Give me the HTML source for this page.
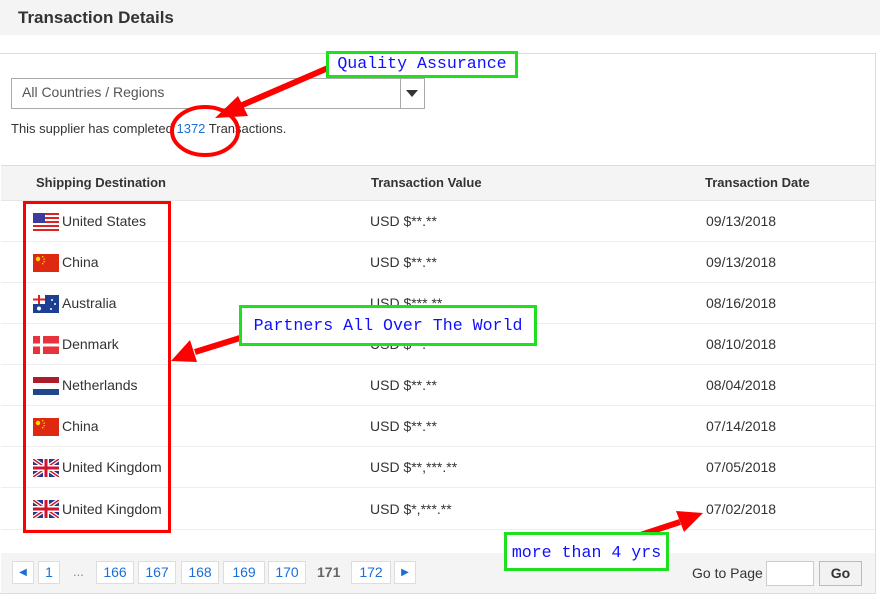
<!DOCTYPE html>
<html><head><meta charset="utf-8"><style>
*{margin:0;padding:0;box-sizing:border-box}
body{width:880px;height:599px;background:#fff;font-family:"Liberation Sans",Arial,sans-serif;font-size:14px;color:#333;position:relative;overflow:hidden}
.a{position:absolute}
.row{position:absolute;left:1px;width:874px;height:41px;border-bottom:1px solid #eee}
.row span{position:absolute;top:12px;font-size:14px;color:#333}
.flag{position:absolute;left:32px;top:12px;width:26px;height:18px}
.pb{position:absolute;top:561px;height:23px;border:1px solid #ddd;background:#fff;color:#1a6fd6;font-size:14px;text-align:center;line-height:21px}
.ann{position:absolute;border:3px solid #1fe01f;background:#fff;color:#1010ff;font-family:"Liberation Mono",monospace;font-size:16.6px;text-align:center;white-space:nowrap}
</style></head><body>
<div class="a" style="left:0;top:0;width:880px;height:35px;background:#f4f4f4"></div>
<div class="a" style="left:18px;top:8px;font-size:17px;font-weight:bold;color:#333">Transaction Details</div>
<div class="a" style="left:0;top:53px;width:876px;height:541px;border:1px solid #ddd;border-left:none"></div>
<div class="a" style="left:11px;top:78px;width:414px;height:31px;border:1px solid #aaa;background:#fff"></div>
<div class="a" style="left:400px;top:78px;width:1px;height:31px;background:#aaa"></div>
<div class="a" style="left:22px;top:84px;font-size:14px;color:#555">All Countries / Regions</div>
<div class="a" style="left:406px;top:90px;width:0;height:0;border-left:6px solid transparent;border-right:6px solid transparent;border-top:7px solid #333"></div>
<div class="a" style="left:11px;top:121px;font-size:13px">This supplier has completed <span style="color:#1a6fd6">1372</span> Transactions.</div>
<div class="a" style="left:1px;top:165px;width:874px;height:36px;background:#f4f4f4;border-top:1px solid #ddd;border-bottom:1px solid #e5e5e5"></div>
<div class="a" style="left:36px;top:175px;font-weight:bold;font-size:13px">Shipping Destination</div>
<div class="a" style="left:371px;top:175px;font-weight:bold;font-size:13px">Transaction Value</div>
<div class="a" style="left:705px;top:175px;font-weight:bold;font-size:13px">Transaction Date</div>

<div class="row" style="top:201px"><svg class="flag" viewBox="0 0 26 18"><rect width="26" height="18" fill="#fff"/><g fill="#d22"><rect y="0" width="26" height="2"/><rect y="4" width="26" height="2"/><rect y="8" width="26" height="2"/><rect y="12" width="26" height="2"/><rect y="16" width="26" height="2"/></g><rect width="12" height="10" fill="#3c3b9e"/></svg><span style="left:61px">United States</span><span style="left:369px">USD $**.**</span><span style="left:705px">09/13/2018</span></div>
<div class="row" style="top:242px"><svg class="flag" viewBox="0 0 26 18"><rect width="26" height="18" fill="#de2910"/><circle cx="5" cy="5" r="2.2" fill="#ffde00"/><g fill="#ffde00"><rect x="9" y="2" width="1.3" height="1.3"/><rect x="10.5" y="4.5" width="1.3" height="1.3"/><rect x="10.5" y="7" width="1.3" height="1.3"/><rect x="9" y="9" width="1.3" height="1.3"/></g></svg><span style="left:61px">China</span><span style="left:369px">USD $**.**</span><span style="left:705px">09/13/2018</span></div>
<div class="row" style="top:283px"><svg class="flag" viewBox="0 0 26 18"><rect width="26" height="18" fill="#1c3f94"/><rect width="12" height="9" fill="#fff"/><rect x="5" width="2" height="9" fill="#d22"/><rect y="3.5" width="12" height="2" fill="#d22"/><circle cx="6" cy="13.5" r="2" fill="#fff"/><circle cx="19" cy="5" r="1" fill="#fff"/><circle cx="22" cy="9" r="1" fill="#fff"/><circle cx="18" cy="14" r="1" fill="#fff"/></svg><span style="left:61px">Australia</span><span style="left:369px">USD $***.**</span><span style="left:705px">08/16/2018</span></div>
<div class="row" style="top:324px"><svg class="flag" viewBox="0 0 26 18"><rect width="26" height="18" fill="#e8323c"/><rect x="7" width="3" height="18" fill="#fff"/><rect y="7.5" width="26" height="3" fill="#fff"/></svg><span style="left:61px">Denmark</span><span style="left:369px">USD $**.**</span><span style="left:705px">08/10/2018</span></div>
<div class="row" style="top:365px"><svg class="flag" viewBox="0 0 26 18"><rect width="26" height="6" fill="#ae1c28"/><rect y="6" width="26" height="6" fill="#fff"/><rect y="12" width="26" height="6" fill="#21468b"/></svg><span style="left:61px">Netherlands</span><span style="left:369px">USD $**.**</span><span style="left:705px">08/04/2018</span></div>
<div class="row" style="top:406px"><svg class="flag" viewBox="0 0 26 18"><rect width="26" height="18" fill="#de2910"/><circle cx="5" cy="5" r="2.2" fill="#ffde00"/><g fill="#ffde00"><rect x="9" y="2" width="1.3" height="1.3"/><rect x="10.5" y="4.5" width="1.3" height="1.3"/><rect x="10.5" y="7" width="1.3" height="1.3"/><rect x="9" y="9" width="1.3" height="1.3"/></g></svg><span style="left:61px">China</span><span style="left:369px">USD $**.**</span><span style="left:705px">07/14/2018</span></div>
<div class="row" style="top:447px"><svg class="flag" viewBox="0 0 26 18"><rect width="26" height="18" fill="#24388c"/><path d="M0 0L26 18M26 0L0 18" stroke="#fff" stroke-width="4"/><path d="M0 0L26 18M26 0L0 18" stroke="#cf142b" stroke-width="1.5"/><rect x="10" width="6" height="18" fill="#fff"/><rect y="6" width="26" height="6" fill="#fff"/><rect x="11.5" width="3" height="18" fill="#cf142b"/><rect y="7.5" width="26" height="3" fill="#cf142b"/></svg><span style="left:61px">United Kingdom</span><span style="left:369px">USD $**,***.**</span><span style="left:705px">07/05/2018</span></div>
<div class="row" style="top:488px;height:42px"><svg class="flag" viewBox="0 0 26 18"><rect width="26" height="18" fill="#24388c"/><path d="M0 0L26 18M26 0L0 18" stroke="#fff" stroke-width="4"/><path d="M0 0L26 18M26 0L0 18" stroke="#cf142b" stroke-width="1.5"/><rect x="10" width="6" height="18" fill="#fff"/><rect y="6" width="26" height="6" fill="#fff"/><rect x="11.5" width="3" height="18" fill="#cf142b"/><rect y="7.5" width="26" height="3" fill="#cf142b"/></svg><span style="left:61px;top:13px">United Kingdom</span><span style="left:369px;top:13px">USD $*,***.**</span><span style="left:705px;top:13px">07/02/2018</span></div>

<div class="a" style="left:1px;top:553px;width:874px;height:40px;background:#f4f4f4"></div>
<div class="pb" style="left:12px;width:22px;color:#1a6fd6;font-size:10px">&#9664;</div>
<div class="pb" style="left:38px;width:22px">1</div>
<div class="a" style="left:73px;top:564px;color:#888;font-size:13px">...</div>
<div class="pb" style="left:96px;width:38px">166</div>
<div class="pb" style="left:138px;width:38px">167</div>
<div class="pb" style="left:181px;width:38px">168</div>
<div class="pb" style="left:223px;width:42px">169</div>
<div class="pb" style="left:268px;width:38px">170</div>
<div class="a" style="left:317px;top:564px;color:#666;font-weight:bold;font-size:14px">171</div>
<div class="pb" style="left:351px;width:40px">172</div>
<div class="pb" style="left:394px;width:22px;font-size:10px">&#9654;</div>
<div class="a" style="left:692px;top:565px;font-size:14px;color:#333">Go to Page</div>
<div class="a" style="left:766px;top:561px;width:48px;height:25px;border:1px solid #ccc;background:#fff"></div>
<div class="a" style="left:819px;top:561px;width:43px;height:25px;border:1px solid #bbb;background:#f2f2f2;font-weight:bold;text-align:center;line-height:23px">Go</div>

<div class="a" style="left:23px;top:201px;width:148px;height:332px;border:3px solid #f00"></div>
<svg class="a" style="left:0;top:0" width="880" height="599">
<ellipse cx="205" cy="131" rx="33" ry="24" fill="none" stroke="#f00" stroke-width="4"/>
<line x1="328" y1="68" x2="240" y2="106" stroke="#f00" stroke-width="6"/>
<polygon points="215,118 238,96 248,116" fill="#f00"/>
<line x1="240" y1="338" x2="195" y2="352" stroke="#f00" stroke-width="6"/>
<polygon points="171,361 190,340 197,362" fill="#f00"/>
<line x1="622" y1="541" x2="680" y2="522" stroke="#f00" stroke-width="6"/>
<polygon points="703,513 676,511 684,532" fill="#f00"/>
</svg>
<div class="ann" style="left:326px;top:51px;width:192px;height:27px;line-height:20px">Quality Assurance</div>
<div class="ann" style="left:239px;top:305px;width:298px;height:41px;line-height:35px">Partners All Over The World</div>
<div class="ann" style="left:504px;top:532px;width:165px;height:39px;line-height:36px">more than 4 yrs</div>
</body></html>
